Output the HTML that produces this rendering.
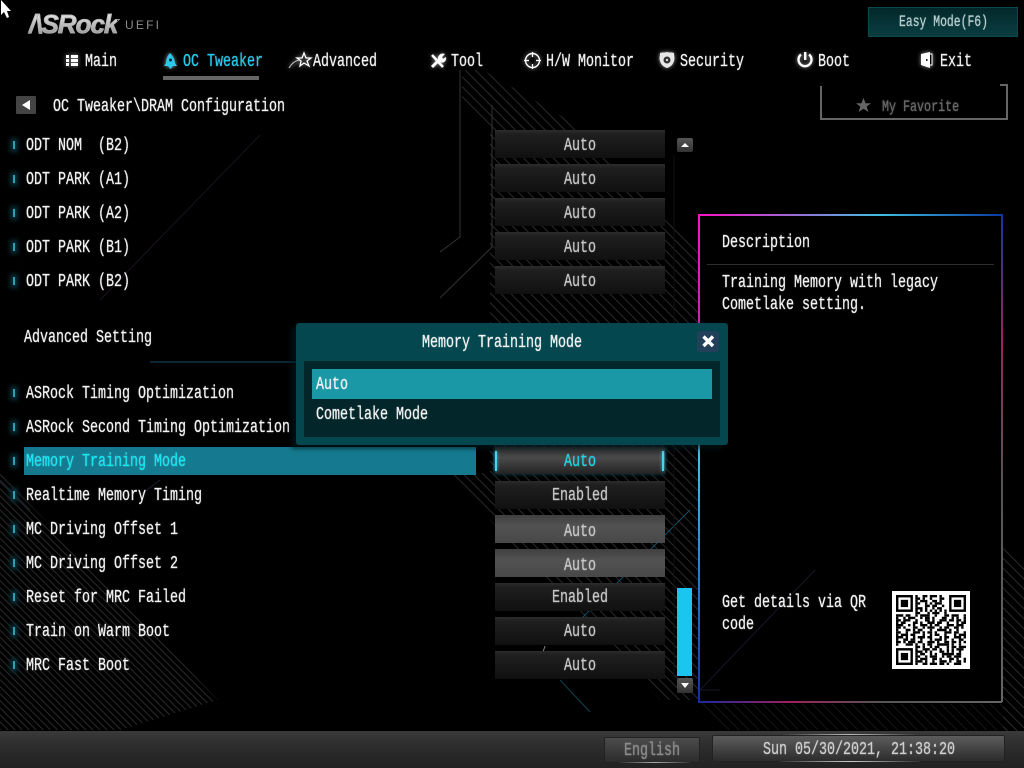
<!DOCTYPE html>
<html><head><meta charset="utf-8"><style>
html,body{margin:0;padding:0;background:#000;width:1024px;height:768px;overflow:hidden}
#r{position:relative;width:1024px;height:768px;overflow:hidden;background:#000}
.t{position:absolute;margin-top:2px;font:18px/20px "Liberation Mono",monospace;color:#f4f4f4;white-space:pre;transform:scaleX(.7407);transform-origin:0 50%;height:20px;-webkit-text-stroke:.2px currentColor;text-shadow:0 0 2px rgba(255,255,255,.25)}
.b{position:absolute;left:495px;width:170px;height:28px;background:linear-gradient(#2c2c2c,#1f1f1f 15%,#101010);box-sizing:border-box}
.g{background:linear-gradient(#404040,#525252 40%,#484848)}
.v{color:#c8c8c8}
.d{position:absolute;left:13px;width:2px;height:8px;background:#2f9db4;box-shadow:0 0 5px 3px #0a2f38}
svg{position:absolute;left:0;top:0}
</style></head><body><div id="r">
<svg width="1024" height="768" fill="none">
<defs>
<pattern id="h" width="7" height="7" patternUnits="userSpaceOnUse" patternTransform="rotate(45)"><rect width="7" height="1" fill="#2a2a2a"/></pattern>
<pattern id="h2" width="5" height="5" patternUnits="userSpaceOnUse" patternTransform="rotate(45)"><rect width="5" height="1" fill="#2a2a2a"/></pattern>
<linearGradient id="t1"><stop offset="0" stop-color="#ff10c8"/><stop offset=".6" stop-color="#40c0e0"/><stop offset="1" stop-color="#0a3aa0"/></linearGradient>
<linearGradient id="l1" x2="0" y2="1"><stop offset="0" stop-color="#ff10c8"/><stop offset=".28" stop-color="#b030a0"/><stop offset=".5" stop-color="#40c0e0"/><stop offset=".85" stop-color="#2060c0"/><stop offset="1" stop-color="#1a2aa0"/></linearGradient>
<linearGradient id="r1" x2="0" y2="1"><stop offset="0" stop-color="#0a3aa0"/><stop offset=".25" stop-color="#a02060"/><stop offset=".55" stop-color="#555"/><stop offset="1" stop-color="#666"/></linearGradient>
<linearGradient id="b1"><stop offset="0" stop-color="#1a2aa0"/><stop offset=".3" stop-color="#a02060"/><stop offset=".6" stop-color="#555"/><stop offset="1" stop-color="#666"/></linearGradient>
</defs>
<polygon points="462,70 483,70 580,127 665,213 700,250 700,700 660,700 490,520 490,130 462,105" fill="url(#h)"/>
<polygon points="445,473 490,473 490,515" fill="url(#h)"/>
<polygon points="0,473 218,700 120,730 0,730" fill="url(#h2)"/>
<polygon points="1024,560 1024,735 1003,735 1003,540" fill="url(#h)"/>
<polygon points="700,704 1003,704 1020,730 720,730" fill="url(#h)" opacity=".5"/>
<path d="M460 70V237L440 252" stroke="#333"/>
<path d="M492 105V247L440 298" stroke="#333"/>
<path d="M260 135L100 300" stroke="#1c1220"/>
<path d="M150 362H296" stroke="#14506a"/>
<path d="M0 480L30 510M160 480L140 495" stroke="#1c2030"/>
<path d="M690 510L560 640" stroke="#15506a"/>
<path d="M545 646L543 652" stroke="#888"/>
<path d="M560 680L590 712" stroke="#104050"/>
<path d="M815 570L700 690L720 690" stroke="#181828"/>
<path d="M674 155V680" stroke="#111"/>
<rect x="698" y="214" width="304" height="2" fill="url(#t1)"/>
<rect x="698" y="214" width="2" height="488" fill="url(#l1)"/>
<rect x="1001" y="214" width="2" height="488" fill="url(#r1)"/>
<rect x="698" y="701" width="304" height="2" fill="url(#b1)"/>
<rect x="707" y="264" width="287" height="1" fill="#2e2e2e"/>
</svg>

<!-- cursor -->
<svg width="14" height="20"><path d="M1 0V15L4 12L7 18L9 17L7 11H11Z" fill="#fff"/></svg>

<!-- logo -->
<div style="position:absolute;left:29px;top:9px;font:italic bold 26px/30px 'Liberation Sans',sans-serif;letter-spacing:-1px;-webkit-text-stroke:.7px #b0b0b0;background:linear-gradient(#f4f4f4,#8a8a8a);-webkit-background-clip:text;background-clip:text;-webkit-text-fill-color:transparent">/\SRock</div>
<div style="position:absolute;left:125px;top:18px;font:12px/14px 'Liberation Sans',sans-serif;color:#8c8c8c;letter-spacing:2.2px">UEFI</div>

<!-- easy mode -->
<div style="position:absolute;left:868px;top:7px;width:150px;height:30px;box-sizing:border-box;border:1px solid #0a4a4c;background:linear-gradient(#03282a,#0a3d40)"></div>
<div class="t" style="left:899px;top:10px;color:#b8d0d0;font-size:16px;transform:scaleX(.713)">Easy Mode(F6)</div>

<!-- tabs -->
<svg width="1024" height="90" style="filter:drop-shadow(0 0 2px rgba(255,255,255,.6))">
<g fill="#fff">
<rect x="66" y="55" width="3" height="3"/><rect x="71" y="55" width="7" height="3"/><rect x="66" y="59" width="3" height="3"/><rect x="71" y="59" width="7" height="3"/><rect x="66" y="63" width="3" height="3"/><rect x="71" y="63" width="7" height="3"/>
</g>
<path d="M170 53C173 56 175 60 175 63L177 66H164L166 63C166 60 167 56 170 53Z" fill="#2ac8ea"/>
<circle cx="170.500" cy="60" r="1.500" fill="#042a34"/>
<path d="M168 66L170.500 69L173 66" fill="#2ac8ea"/>
<path d="M304 53L306 58H311L307 61L309 66L304 63L300 66L301 61L297 58H302Z" stroke="#fff" stroke-width="1.300" fill="none"/>
<path d="M289 68C292 63 295 61 299 60" stroke="#ccc"/>
<path d="M432 55L443 67" stroke="#fff" stroke-width="2.500"/>
<path d="M432 67L439 60" stroke="#fff" stroke-width="3"/>
<path d="M438 60C437 56 441 52 445 54L442 57L443 59L446 57C447 61 443 64 440 62Z" fill="#fff"/>
<circle cx="532.500" cy="60.500" r="7" stroke="#fff" stroke-width="1.400" fill="none"/>
<path d="M532.500 52V57M532.500 64V69M524 60.500H529M536 60.500H541" stroke="#fff" stroke-width="1.200"/>
<path d="M667 52C664 53 662 52 660 53C660 56 659 58 660 61C661 65 664 67 667 68C670 67 673 65 674 61C675 58 674 56 674 53C672 52 670 53 667 52Z" fill="#e8e8e8"/>
<circle cx="667" cy="60" r="3.500" fill="#333"/><circle cx="667" cy="60" r="1.200" fill="#ddd"/>
<path d="M801 54.500A6.500 6.500 0 1 0 809 54.500" stroke="#fff" stroke-width="2.400" fill="none"/>
<rect x="804" y="52" width="2.400" height="8" fill="#fff"/>
<path d="M921 54L930 52V68L921 65Z" fill="#fff"/><path d="M930 54H932V65H930" stroke="#fff"/>
<rect x="926" y="59" width="1.500" height="2" fill="#222"/>
</svg>
<div class="t" style="left:85px;top:50px">Main</div>
<div class="t" style="left:183px;top:50px;color:#22cbee">OC Tweaker</div>
<div class="t" style="left:313px;top:50px">Advanced</div>
<div class="t" style="left:451px;top:50px">Tool</div>
<div class="t" style="left:546px;top:50px">H/W Monitor</div>
<div class="t" style="left:680px;top:50px">Security</div>
<div class="t" style="left:818px;top:50px">Boot</div>
<div class="t" style="left:940px;top:50px">Exit</div>
<div style="position:absolute;left:163px;top:76px;width:96px;height:4px;background:#666"></div>

<!-- breadcrumb -->
<div style="position:absolute;left:16px;top:96px;width:20px;height:18px;background:#444;border-radius:1px"></div>
<svg width="40" height="120"><path d="M30 100V110L22 105Z" fill="#fff"/></svg>
<div class="t" style="left:53px;top:95px">OC Tweaker\DRAM Configuration</div>

<!-- favorite -->
<div style="position:absolute;left:820px;top:86px;width:188px;height:34px;box-sizing:border-box;border:2px solid #666;border-top:0"></div>
<div style="position:absolute;left:1000px;top:84px;width:8px;height:2px;background:#666"></div>
<svg width="1024" height="120"><path d="M863.500 98L865.600 103.200H871L866.700 106.600L868.400 112L863.500 108.800L858.600 112L860.300 106.600L856 103.200H861.400Z" fill="#666"/></svg>
<div class="t" style="left:882px;top:95px;color:#6a6a6a;font-size:16px;transform:scaleX(.73)">My Favorite</div>

<!-- rows -->
<div class="d" style="top:141px"></div><div class="t" style="left:26px;top:134px">ODT NOM  (B2)</div>
<div class="d" style="top:175px"></div><div class="t" style="left:26px;top:168px">ODT PARK (A1)</div>
<div class="d" style="top:209px"></div><div class="t" style="left:26px;top:202px">ODT PARK (A2)</div>
<div class="d" style="top:243px"></div><div class="t" style="left:26px;top:236px">ODT PARK (B1)</div>
<div class="d" style="top:277px"></div><div class="t" style="left:26px;top:270px">ODT PARK (B2)</div>
<div class="t" style="left:24px;top:326px">Advanced Setting</div>
<div class="d" style="top:389px"></div><div class="t" style="left:26px;top:382px">ASRock Timing Optimization</div>
<div class="d" style="top:423px"></div><div class="t" style="left:26px;top:416px">ASRock Second Timing Optimization</div>
<div style="position:absolute;left:24px;top:447px;width:452px;height:28px;background:#157a8f"></div>
<div class="d" style="top:457px"></div><div class="t" style="left:26px;top:450px;color:#16e8f4">Memory Training Mode</div>
<div class="d" style="top:491px"></div><div class="t" style="left:26px;top:484px">Realtime Memory Timing</div>
<div class="d" style="top:525px"></div><div class="t" style="left:26px;top:518px">MC Driving Offset 1</div>
<div class="d" style="top:559px"></div><div class="t" style="left:26px;top:552px">MC Driving Offset 2</div>
<div class="d" style="top:593px"></div><div class="t" style="left:26px;top:586px">Reset for MRC Failed</div>
<div class="d" style="top:627px"></div><div class="t" style="left:26px;top:620px">Train on Warm Boot</div>
<div class="d" style="top:661px"></div><div class="t" style="left:26px;top:654px">MRC Fast Boot</div>

<!-- buttons -->
<div class="b" style="top:130px"></div><div class="t v" style="left:564px;top:134px">Auto</div>
<div class="b" style="top:164px"></div><div class="t v" style="left:564px;top:168px">Auto</div>
<div class="b" style="top:198px"></div><div class="t v" style="left:564px;top:202px">Auto</div>
<div class="b" style="top:232px"></div><div class="t v" style="left:564px;top:236px">Auto</div>
<div class="b" style="top:266px"></div><div class="t v" style="left:564px;top:270px">Auto</div>
<div class="b" style="top:447px;height:27px;background:linear-gradient(#2a2a2a,#4a4a4a 40%,#222);box-shadow:0 0 4px #0b4a58"></div>
<div style="position:absolute;left:495px;top:451px;width:2px;height:20px;background:#4fd0f0;box-shadow:0 0 3px #2ac8ea"></div>
<div style="position:absolute;left:662px;top:451px;width:2px;height:20px;background:#4fd0f0;box-shadow:0 0 3px #2ac8ea"></div>
<div class="t" style="left:564px;top:450px;color:#16d8e8">Auto</div>
<div class="b" style="top:481px"></div><div class="t v" style="left:552px;top:484px">Enabled</div>
<div class="b g" style="top:515px"></div><div class="t v" style="left:564px;top:520px">Auto</div>
<div class="b g" style="top:549px"></div><div class="t v" style="left:564px;top:554px">Auto</div>
<div class="b" style="top:583px"></div><div class="t v" style="left:552px;top:586px">Enabled</div>
<div class="b" style="top:617px"></div><div class="t v" style="left:564px;top:620px">Auto</div>
<div class="b" style="top:651px"></div><div class="t v" style="left:564px;top:654px">Auto</div>

<!-- scrollbar -->
<div style="position:absolute;left:677px;top:138px;width:16px;height:14px;background:linear-gradient(#555,#333);border-radius:2px"></div>
<div style="position:absolute;left:677px;top:588px;width:15px;height:88px;background:#1ac6f0"></div>
<div style="position:absolute;left:677px;top:678px;width:16px;height:15px;background:linear-gradient(#555,#333);border-radius:2px"></div>
<svg width="1024" height="768"><path d="M681 147H689L685 143Z" fill="#fff"/><path d="M681 683H689L685 688Z" fill="#fff"/></svg>

<!-- description -->
<div class="t" style="left:722px;top:231px">Description</div>
<div class="t" style="left:722px;top:271px">Training Memory with legacy</div>
<div class="t" style="left:722px;top:293px">Cometlake setting.</div>
<div class="t" style="left:722px;top:591px">Get details via QR</div>
<div class="t" style="left:722px;top:613px">code</div>

<!-- QR -->
<div style="position:absolute;left:892px;top:591px;width:78px;height:78px;background:#fff"></div>
<svg width="70" height="70" viewBox="0 0 29 29" style="left:896px;top:595px" fill="none" stroke="#000" stroke-width="1">
<g>
<path d="M8 .5h13" stroke-dasharray="1 2 2 1 3 1 1 2"/>
<path d="M8 1.500h13" stroke-dasharray="2 1 1 2 1 3 2 1"/>
<path d="M8 2.500h13" stroke-dasharray="1 1 3 2 2 1 1 2"/>
<path d="M8 3.500h13" stroke-dasharray="2 2 1 1 1 1 3 2"/>
<path d="M8 4.500h13" stroke-dasharray="1 3 2 1 2 2 1 1"/>
<path d="M8 5.500h13" stroke-dasharray="3 1 1 2 1 1 2 2"/>
<path d="M8 6.500h13" stroke-dasharray="1 1 1 1 1 1 1 1"/>
<path d="M8 7.500h13" stroke-dasharray="2 3 1 1 3 2"/>
<path d="M0 8.500h29" stroke-dasharray="3 1 2 2 1 1 4 2 1 3 2 1 3 2"/>
<path d="M0 9.500h29" stroke-dasharray="1 2 1 1 3 2 1 1 2 1 1 3 2 2 1 1"/>
<path d="M0 10.500h29" stroke-dasharray="2 1 3 2 1 3 2 1 1 2 3 1 2 1"/>
<path d="M0 11.500h29" stroke-dasharray="1 1 2 3 2 1 1 2 3 1 2 2 1 3"/>
<path d="M0 12.500h29" stroke-dasharray="3 2 1 1 1 2 3 1 1 1 2 3 3 1"/>
<path d="M0 13.500h29" stroke-dasharray="2 1 1 3 2 2 1 1 3 2 1 1 2 2"/>
<path d="M0 14.500h29" stroke-dasharray="1 3 2 1 1 1 2 3 1 2 4 1 1 2"/>
<path d="M0 15.500h29" stroke-dasharray="2 2 1 2 3 1 1 1 2 1 1 3 3 1"/>
<path d="M0 16.500h29" stroke-dasharray="1 1 3 1 2 3 1 2 1 1 2 2 1 3"/>
<path d="M0 17.500h29" stroke-dasharray="3 1 1 2 1 1 3 1 2 3 1 1 2 2"/>
<path d="M0 18.500h29" stroke-dasharray="1 2 2 1 2 2 1 3 1 1 3 1 1 2"/>
<path d="M0 19.500h29" stroke-dasharray="2 1 1 1 3 1 2 2 3 1 1 2 2 1"/>
<path d="M0 20.500h29" stroke-dasharray="1 3 3 1 1 2 1 1 2 2 5 1 1 2"/>
<path d="M8 21.500h21" stroke-dasharray="2 1 1 2 1 1 2 3 1 1 2 1 3"/>
<path d="M8 22.500h21" stroke-dasharray="1 2 3 1 2 1 1 2 1 1 1 1 3 2"/>
<path d="M8 23.500h21" stroke-dasharray="3 1 1 1 1 3 2 1 1 1 1 2 1 2"/>
<path d="M8 24.500h21" stroke-dasharray="1 1 2 2 1 1 1 2 5 1 2 2"/>
<path d="M8 25.500h21" stroke-dasharray="2 2 1 1 3 2 1 1 2 1 3 2"/>
<path d="M8 26.500h21" stroke-dasharray="1 1 3 2 2 1 1 3 2 1 1 2"/>
<path d="M8 27.500h21" stroke-dasharray="3 1 1 2 1 2 3 1 1 2 2 1"/>
<path d="M8 28.500h21" stroke-dasharray="1 2 2 1 3 1 2 1 1 2 3 2"/>
</g>
<rect x=".5" y=".5" width="6" height="6"/><rect x="2" y="2" width="3" height="3" fill="#000" stroke="none"/>
<rect x="22.500" y=".5" width="6" height="6"/><rect x="24" y="2" width="3" height="3" fill="#000" stroke="none"/>
<rect x=".5" y="22.500" width="6" height="6"/><rect x="2" y="24" width="3" height="3" fill="#000" stroke="none"/>
</svg>

<!-- popup -->
<div style="position:absolute;left:296px;top:323px;width:432px;height:122px;background:#04474e;border-radius:3px;box-shadow:-5px 4px 4px rgba(0,25,30,.6)"></div>
<div style="position:absolute;left:304px;top:361px;width:416px;height:76px;background:#02262a"></div>
<div style="position:absolute;left:312px;top:369px;width:400px;height:30px;background:#1a98a6"></div>
<div class="t" style="left:422px;top:331px">Memory Training Mode</div>
<div class="t" style="left:316px;top:373px">Auto</div>
<div class="t" style="left:316px;top:403px">Cometlake Mode</div>
<div style="position:absolute;left:697px;top:331px;width:22px;height:21px;background:#23405a;border-radius:3px"></div>
<svg width="1024" height="768"><path d="M703.500 336.500L713 346M713 336.500L703.500 346" stroke="#fff" stroke-width="3.400"/></svg>

<!-- bottom bar -->
<div style="position:absolute;left:0;top:731px;width:1024px;height:37px;background:linear-gradient(#3a3a3a,#2c2c2c 45%,#222)"></div>
<div style="position:absolute;left:604px;top:737px;width:96px;height:26px;box-sizing:border-box;border:1px solid #222;border-radius:2px;background:linear-gradient(#4c4c4c,#2c2c2c)"></div>
<div style="position:absolute;left:620px;top:762px;width:70px;height:1px;background:linear-gradient(90deg,#333,#aaa,#333)"></div>
<div style="position:absolute;left:712px;top:735px;width:293px;height:27px;box-sizing:border-box;border:1px solid #222;border-radius:2px;background:linear-gradient(#5c5c5c,#2c2c2c)"></div>
<div style="position:absolute;left:780px;top:734px;width:140px;height:1px;background:linear-gradient(90deg,#333,#bbb,#333)"></div>
<div style="position:absolute;left:780px;top:761px;width:140px;height:1px;background:linear-gradient(90deg,#333,#ccc,#333)"></div>
<div class="t" style="left:624px;top:739px;color:#8c8c8c">English</div>
<div class="t" style="left:763px;top:738px;color:#cfcfcf">Sun 05/30/2021, 21:38:20</div>
</div></body></html>
